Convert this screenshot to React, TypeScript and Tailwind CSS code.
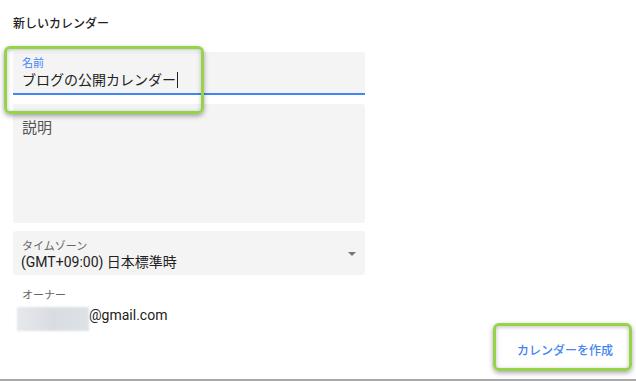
const App = () => {
    const font = { fontFamily: '"Roboto", "Noto Sans CJK JP", sans-serif' };

    return (
        <div className="relative w-[636px] h-[381px] bg-white overflow-hidden text-[#222]" style={font}>
            <div className="pl-[13px] pt-[16px] w-[365px]">
                <h2 className="text-[12px] font-medium leading-[16px] text-[#222]">新しいカレンダー</h2>

                {/* 名前 */}
                <div className="mt-[20px] h-[43px] bg-[#f4f4f4] rounded-t-[3px] border-b-2 border-[#4285f4] px-[9px] pt-[5px]">
                    <div className="text-[11px] leading-[13px] text-[#4285f4]">名前</div>
                    <div className="text-[14px] leading-[20px] text-[#222] flex items-center">
                        ブログの公開カレンダー
                        <span className="inline-block w-[1px] h-[16px] bg-[#222] ml-[1px]" />
                    </div>
                </div>

                {/* 説明 */}
                <div className="mt-[9px] h-[119px] bg-[#f4f4f4] rounded-[3px] px-[9px] pt-[14px]">
                    <div className="text-[15px] leading-[20px] text-[#555]">説明</div>
                </div>

                {/* タイムゾーン */}
                <div className="mt-[8px] h-[44px] bg-[#f4f4f4] rounded-[3px] px-[9px] pt-[9px] flex justify-between">
                    <div>
                        <div className="text-[11px] leading-[14px] text-[#666]">タイムゾーン</div>
                        <div className="text-[14px] leading-[17px] text-[#222] -ml-[1px]">(GMT+09:00) 日本標準時</div>
                    </div>
                    <div className="mt-[12px] w-0 h-0 border-l-[4px] border-r-[4px] border-t-[4px] border-l-transparent border-r-transparent border-t-[#757575]" />
                </div>

                {/* オーナー */}
                <div className="mt-[14px] pl-[9px] text-[11px] leading-[14px] text-[#666]">オーナー</div>
                <div className="mt-[4px] pl-[4px] flex items-start">
                    <div className="w-[72px] h-[24px] bg-gradient-to-r from-[#e6e9ec] via-[#d9dde1] to-[#dde2e7] blur-[1px]" />
                    <span className="text-[14px] leading-[16px] text-[#222]">@gmail.com</span>
                </div>
            </div>

            {/* ボタン */}
            <div className="absolute right-[15px] top-[343px] px-[8px] text-[12px] font-medium leading-[16px] text-[#4285f4]">
                カレンダーを作成
            </div>

            {/* bottom border */}
            <div className="absolute left-0 right-0 bottom-0 h-[2px] bg-[#a9a9a9]" />

            {/* highlights */}
            <div className="absolute left-[4px] top-[46px] w-[200px] h-[68px] rounded-[6px] border-[3px] border-[#95d34b] shadow-[0_2px_5px_rgba(0,0,0,0.35),inset_0_1px_4px_rgba(0,0,0,0.25)]" />
            <div className="absolute left-[493px] top-[323px] w-[139px] h-[48px] rounded-[6px] border-[3px] border-[#95d34b] shadow-[0_2px_5px_rgba(0,0,0,0.35),inset_0_1px_4px_rgba(0,0,0,0.25)]" />
        </div>
    );
};

export default App;
